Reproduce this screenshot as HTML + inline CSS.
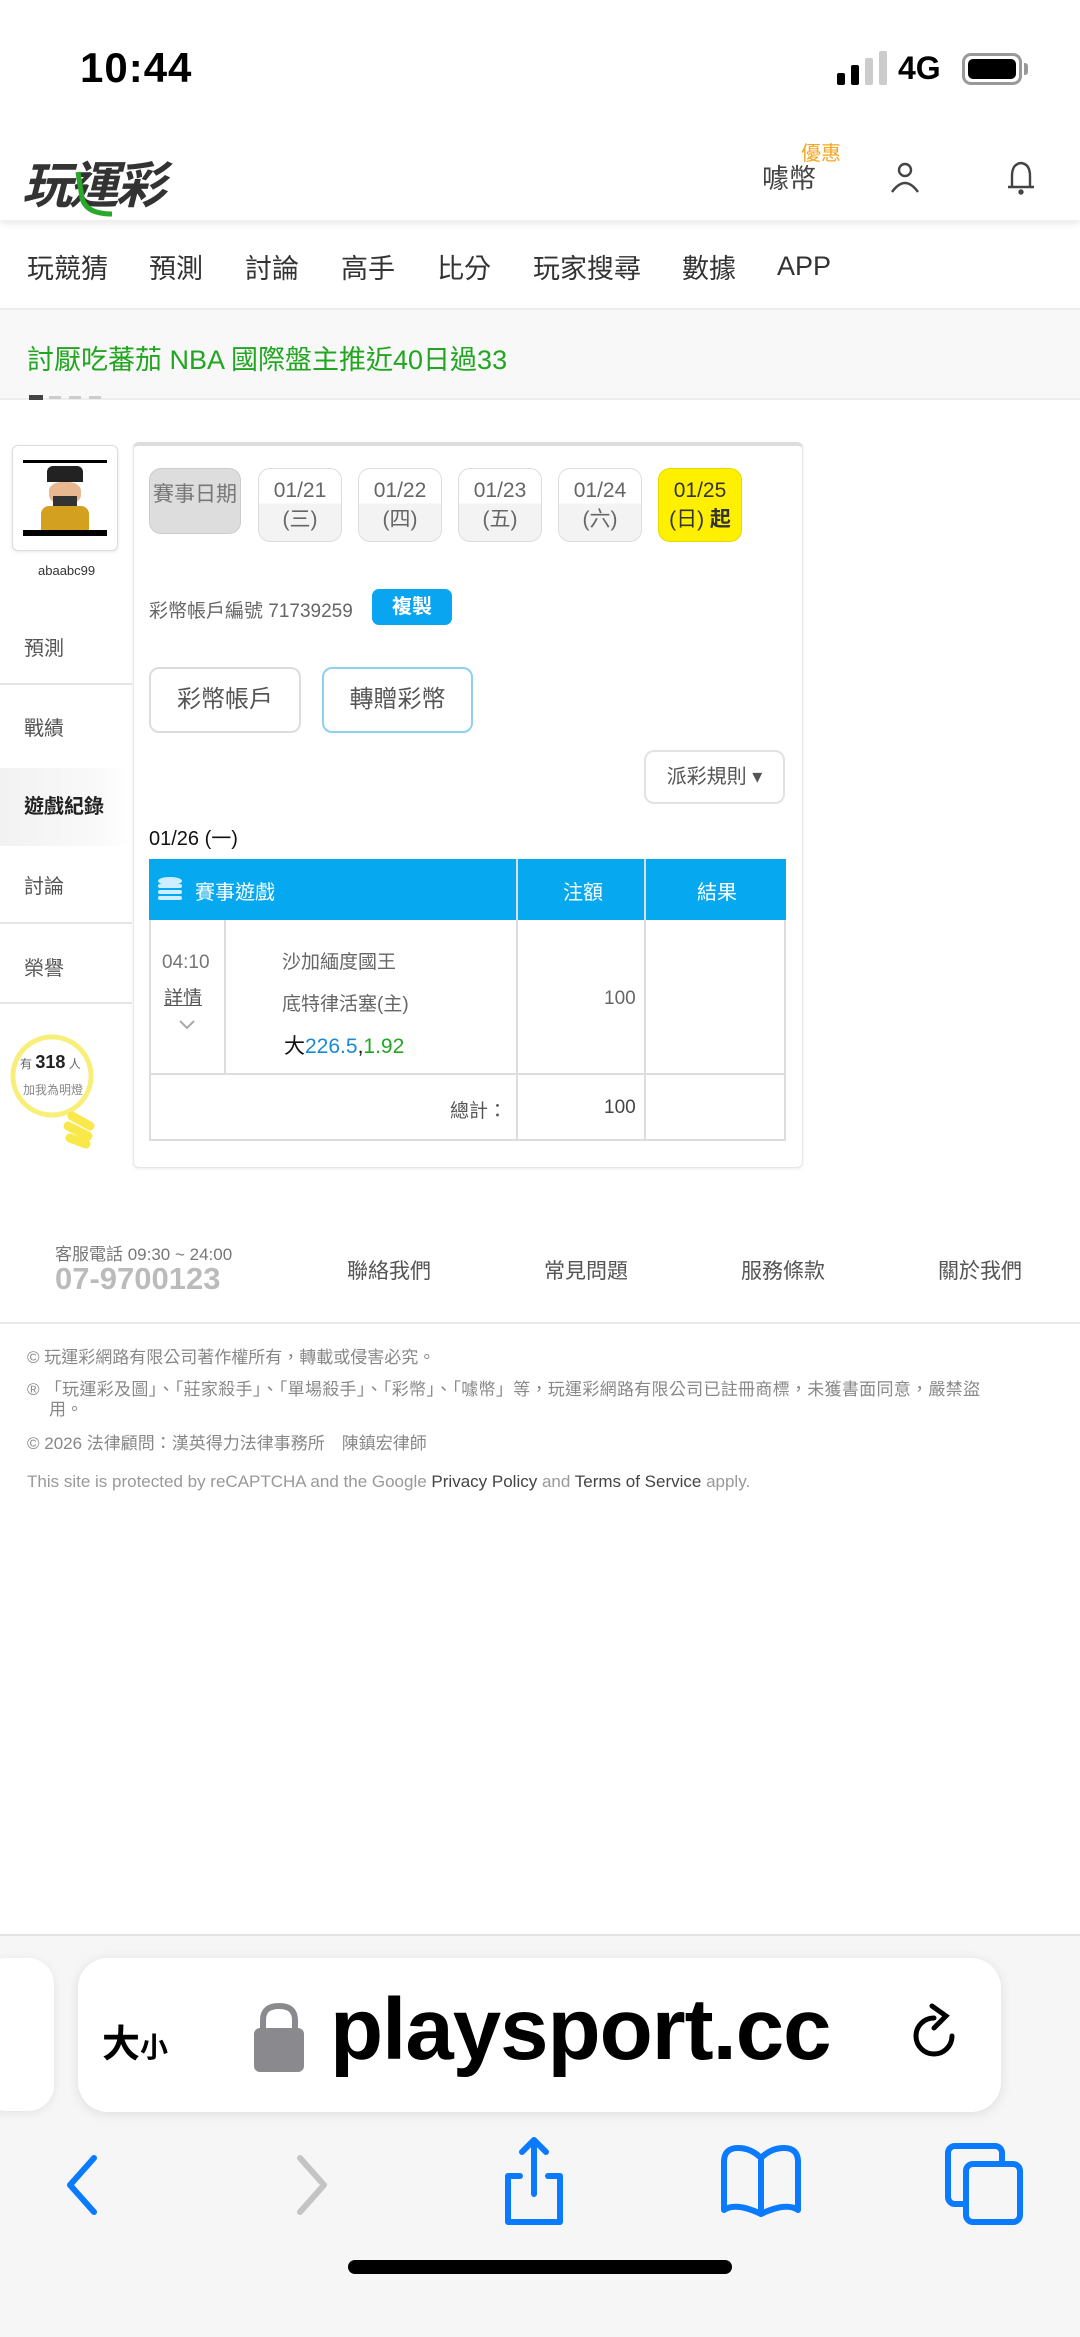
<!DOCTYPE html>
<html><head><meta charset="utf-8"><style>
*{margin:0;padding:0;box-sizing:border-box}
body{width:1080px;height:2337px;position:relative;background:#fff;font-family:"Liberation Sans","Noto Sans CJK TC",sans-serif;overflow:hidden;color:#333}
.a{position:absolute;white-space:nowrap}
.db{position:absolute;top:468px;width:84px;height:74px;border:1px solid #ddd;border-radius:12px;background:linear-gradient(#fff 0,#fff 48%,#f3f3f3 48%);text-align:center;font-size:21px;color:#666;line-height:29px;padding-top:7px}
.side{position:absolute;left:0;width:130px;font-size:20px;color:#555;padding-left:24px}
.ln{position:absolute;left:0;width:132px;height:2px;background:#e5e5e5}
.ft{font-size:17px;color:#888}
</style></head><body>
<!-- status bar -->
<div class="a" style="left:80px;top:44px;font-size:42px;font-weight:bold;color:#000;letter-spacing:1px">10:44</div>
<div class="a" style="left:837px;top:73px;width:8px;height:12px;background:#000;border-radius:2px"></div>
<div class="a" style="left:851px;top:65px;width:8px;height:20px;background:#000;border-radius:2px"></div>
<div class="a" style="left:865px;top:58px;width:8px;height:27px;background:#ccc;border-radius:2px"></div>
<div class="a" style="left:879px;top:51px;width:8px;height:34px;background:#ccc;border-radius:2px"></div>
<div class="a" style="left:898px;top:50px;font-size:32px;font-weight:bold;color:#000">4G</div>
<div class="a" style="left:962px;top:53px;width:60px;height:32px;border:3px solid #999;border-radius:9px;padding:3px"><div style="width:100%;height:100%;background:#000;border-radius:5px"></div></div>
<div class="a" style="left:1024px;top:63px;width:4px;height:12px;background:#999;border-radius:0 3px 3px 0"></div>
<!-- header -->
<div class="a" style="left:0;top:120px;width:1080px;height:100px;background:#fff;box-shadow:0 4px 6px rgba(0,0,0,.08)"></div>
<div class="a" style="left:22px;top:146px;font-size:50px;font-weight:bold;font-style:italic;color:#333;letter-spacing:-3px">玩運彩</div>
<svg class="a" style="left:70px;top:170px" width="50" height="50"><path d="M8 2 L12 28 Q16 44 42 44" stroke="#2aa82a" stroke-width="5" fill="none"/></svg>
<div class="a" style="left:762px;top:157px;font-size:27px;color:#444">噱幣</div>
<div class="a" style="left:801px;top:137px;font-size:20px;color:#f5a623">優惠</div>
<svg class="a" style="left:888px;top:160px" width="34" height="34" fill="none" stroke="#444" stroke-width="2.4"><circle cx="17" cy="10" r="6"/><path d="M4 32 Q17 14 30 32"/></svg>
<svg class="a" style="left:1004px;top:160px" width="34" height="36" fill="none" stroke="#444" stroke-width="2.4"><path d="M17 3 Q8 4 8 16 L8 27 L26 27 L26 16 Q26 4 17 3 Z M4 27 L30 27"/><circle cx="17" cy="32" r="1.5" fill="#444"/></svg>
<!-- nav -->
<div class="a" style="left:27px;top:247px;font-size:27px;color:#333">
<span style="position:absolute;left:0">玩競猜</span><span style="position:absolute;left:122px">預測</span><span style="position:absolute;left:218px">討論</span><span style="position:absolute;left:314px">高手</span><span style="position:absolute;left:410px">比分</span><span style="position:absolute;left:506px">玩家搜尋</span><span style="position:absolute;left:655px">數據</span><span style="position:absolute;left:750px;top:4px">APP</span></div>
<div class="a" style="left:0;top:308px;width:1080px;height:92px;background:#f8f8f8;border-top:2px solid #eee;border-bottom:2px solid #eee"></div>
<div class="a" style="left:27px;top:338px;font-size:27px;color:#22a622">討厭吃蕃茄 NBA 國際盤主推近40日過33</div>
<div class="a" style="left:29px;top:395px;width:14px;height:5px;background:#444"></div>
<div class="a" style="left:49px;top:396px;width:12px;height:3px;background:#ccc"></div>
<div class="a" style="left:69px;top:396px;width:12px;height:3px;background:#ccc"></div>
<div class="a" style="left:89px;top:396px;width:12px;height:3px;background:#ccc"></div>
<!-- sidebar -->
<div class="a" style="left:12px;top:445px;width:106px;height:106px;border:1px solid #ddd;border-radius:6px;background:#fff;box-shadow:0 1px 3px rgba(0,0,0,.1)"></div>
<div class="a" style="left:23px;top:460px;width:84px;height:76px;background:#fff">
<div style="position:absolute;left:0;top:0;width:84px;height:3px;background:#000"></div>
<div style="position:absolute;left:24px;top:6px;width:36px;height:16px;background:#222;border-radius:6px 6px 0 0"></div>
<div style="position:absolute;left:26px;top:22px;width:32px;height:22px;background:#e8b890;border-radius:40%"></div>
<div style="position:absolute;left:30px;top:36px;width:24px;height:10px;background:#333"></div>
<div style="position:absolute;left:18px;top:46px;width:48px;height:24px;background:#d4a020;border-radius:8px 8px 0 0"></div>
<div style="position:absolute;left:0;top:70px;width:84px;height:6px;background:#000"></div>
</div>
<div class="a" style="left:38px;top:563px;font-size:13px;color:#333">abaabc99</div>
<div class="side" style="top:632px">預測</div>
<div class="ln" style="top:683px"></div>
<div class="side" style="top:712px">戰績</div>
<div class="a" style="left:0;top:768px;width:133px;height:78px;background:linear-gradient(90deg,#f2f2f2,#f9f9f9 70%,#fff)"></div>
<div class="side" style="top:790px;font-weight:bold;color:#222">遊戲紀錄</div>
<div class="side" style="top:870px">討論</div>
<div class="ln" style="top:922px"></div>
<div class="side" style="top:952px">榮譽</div>
<div class="ln" style="top:1002px"></div>
<svg class="a" style="left:6px;top:1030px" width="96" height="120"><circle cx="46" cy="46" r="39" fill="none" stroke="#f8ef7a" stroke-width="5"/><g stroke="#f8e84a" stroke-width="9" stroke-linecap="round"><path d="M66 86 L84 96"/><path d="M62 96 L82 106"/><path d="M64 108 L80 114"/></g></svg>
<div class="a" style="left:20px;top:1052px;font-size:12px;color:#666">有 <b style="font-size:18px;color:#222">318</b> 人</div>
<div class="a" style="left:23px;top:1081px;font-size:12px;color:#888">加我為明燈</div>
<!-- main panel -->
<div class="a" style="left:133px;top:442px;width:670px;height:726px;border:1px solid #e6e6e6;border-top:4px solid #ddd;border-radius:6px;background:#fff;box-shadow:0 1px 3px rgba(0,0,0,.08)"></div>
<div class="db" style="left:149px;width:92px;height:66px;top:468px;background:#ddd;border-color:#ccc;line-height:52px;padding:0;font-size:21px;color:#777">賽事日期</div>
<div class="db" style="left:258px">01/21<br>(三)</div>
<div class="db" style="left:358px">01/22<br>(四)</div>
<div class="db" style="left:458px">01/23<br>(五)</div>
<div class="db" style="left:558px">01/24<br>(六)</div>
<div class="db" style="left:658px;background:#fff000;border-color:#e8d800;color:#333">01/25<br>(日) <b>起</b></div>
<div class="a" style="left:149px;top:596px;font-size:19px;color:#666">彩幣帳戶編號 71739259</div>
<div class="a" style="left:372px;top:589px;width:80px;height:36px;background:#0aa5f0;border-radius:7px;color:#fff;font-size:20px;font-weight:bold;text-align:center;line-height:36px">複製</div>
<div class="a" style="left:149px;top:667px;width:152px;height:66px;border:2px solid #ddd;border-radius:10px;text-align:center;line-height:62px;font-size:24px;color:#555">彩幣帳戶</div>
<div class="a" style="left:322px;top:667px;width:151px;height:66px;border:2px solid #8dd0f0;border-radius:10px;text-align:center;line-height:62px;font-size:24px;color:#555">轉贈彩幣</div>
<div class="a" style="left:644px;top:750px;width:141px;height:54px;border:2px solid #e2e2e2;border-radius:10px;text-align:center;line-height:50px;font-size:20px;color:#555">派彩規則 ▾</div>
<div class="a" style="left:149px;top:822px;font-size:20px;color:#111">01/26 (一)</div>
<div class="a" style="left:149px;top:859px;width:637px;height:282px;border:2px solid #ddd"></div>
<div class="a" style="left:149px;top:859px;width:637px;height:61px;background:#06a8f0"></div>
<div class="a" style="left:516px;top:859px;width:2px;height:282px;background:#ddd"></div>
<div class="a" style="left:644px;top:859px;width:2px;height:282px;background:#ddd"></div>
<div class="a" style="left:224px;top:920px;width:2px;height:155px;background:#ddd"></div>
<div class="a" style="left:149px;top:1073px;width:637px;height:2px;background:#ddd"></div>
<svg class="a" style="left:157px;top:876px" width="26" height="28"><g fill="#cfeeff"><ellipse cx="13" cy="5" rx="12" ry="4"/><rect x="1" y="8" width="24" height="4" rx="2"/><rect x="1" y="14" width="24" height="4" rx="2"/><rect x="1" y="20" width="24" height="4" rx="2"/></g></svg>
<div class="a" style="left:195px;top:876px;font-size:20px;color:#fff">賽事遊戲</div>
<div class="a" style="left:563px;top:876px;font-size:20px;color:#fff">注額</div>
<div class="a" style="left:697px;top:876px;font-size:20px;color:#fff">結果</div>
<div class="a" style="left:162px;top:952px;font-size:19px;color:#777">04:10</div>
<div class="a" style="left:164px;top:983px;font-size:19px;color:#555;text-decoration:underline">詳情</div>
<svg class="a" style="left:178px;top:1019px" width="18" height="12"><path d="M2 2 L9 9 L16 2" stroke="#aaa" stroke-width="2" fill="none"/></svg>
<div class="a" style="left:282px;top:947px;font-size:19px;color:#666">沙加緬度國王</div>
<div class="a" style="left:282px;top:989px;font-size:19px;color:#666">底特律活塞(主)</div>
<div class="a" style="left:284px;top:1030px;font-size:21px;color:#111">大<span style="color:#1a8ad4">226.5</span>,<span style="color:#22a622">1.92</span></div>
<div class="a" style="left:604px;top:988px;font-size:19px;color:#666">100</div>
<div class="a" style="left:450px;top:1096px;font-size:19px;color:#555">總計：</div>
<div class="a" style="left:604px;top:1097px;font-size:19px;color:#444">100</div>
<!-- footer -->
<div class="a" style="left:55px;top:1240px;font-size:17px;color:#777">客服電話 09:30 ~ 24:00</div>
<div class="a" style="left:55px;top:1261px;font-size:31px;color:#bbb;font-weight:bold">07-9700123</div>
<div class="a" style="left:347px;top:1255px;font-size:21px;color:#555">聯絡我們</div>
<div class="a" style="left:544px;top:1255px;font-size:21px;color:#555">常見問題</div>
<div class="a" style="left:741px;top:1255px;font-size:21px;color:#555">服務條款</div>
<div class="a" style="left:938px;top:1255px;font-size:21px;color:#555">關於我們</div>
<div class="a" style="left:0;top:1322px;width:1080px;height:2px;background:#eaeaea"></div>
<div class="a ft" style="left:27px;top:1343px">© 玩運彩網路有限公司著作權所有，轉載或侵害必究。</div>
<div class="a ft" style="left:27px;top:1375px;letter-spacing:0.3px">® 「玩運彩及圖」、「莊家殺手」、「單場殺手」、「彩幣」、「噱幣」等，玩運彩網路有限公司已註冊商標，未獲書面同意，嚴禁盜</div>
<div class="a ft" style="left:49px;top:1395px">用。</div>
<div class="a ft" style="left:27px;top:1429px">© 2026 法律顧問：漢英得力法律事務所　陳鎮宏律師</div>
<div class="a ft" style="left:27px;top:1472px;color:#999">This site is protected by reCAPTCHA and the Google <b style="color:#444;font-weight:normal">Privacy Policy</b> and <b style="color:#444;font-weight:normal">Terms of Service</b> apply.</div>
<!-- safari -->
<div class="a" style="left:0;top:1934px;width:1080px;height:403px;background:#f6f6f6;border-top:2px solid #e3e3e3"></div>
<div class="a" style="left:-20px;top:1958px;width:74px;height:153px;background:#fff;border-radius:26px;box-shadow:0 2px 10px rgba(0,0,0,.08)"></div>
<div class="a" style="left:78px;top:1958px;width:923px;height:154px;background:#fff;border-radius:30px;box-shadow:0 2px 12px rgba(0,0,0,.1)"></div>
<div class="a" style="left:102px;top:2013px;font-size:38px;font-weight:bold;color:#000">大<span style="font-size:28px">小</span></div>
<svg class="a" style="left:252px;top:2000px" width="54" height="72"><path d="M11 30 V20 Q11 6 27 6 Q43 6 43 20 V30" stroke="#8a8a8e" stroke-width="6" fill="none"/><rect x="2" y="28" width="50" height="44" rx="6" fill="#8a8a8e"/></svg>
<div class="a" style="left:330px;top:1980px;font-size:87px;font-weight:bold;color:#000;letter-spacing:-1px">playsport.cc</div>
<svg class="a" style="left:912px;top:2002px" width="56" height="64" fill="none" stroke="#000" stroke-width="5" stroke-linecap="round"><path d="M22 16 A18 18 0 1 0 40 34"/><path d="M20 4 L34 14 L22 26"/></svg>
<svg class="a" style="left:56px;top:2152px" width="50" height="70" fill="none" stroke="#0a7aff" stroke-width="6" stroke-linecap="round" stroke-linejoin="round"><path d="M38 6 L14 33 L38 60"/></svg>
<svg class="a" style="left:288px;top:2152px" width="50" height="70" fill="none" stroke="#c4c4c4" stroke-width="6" stroke-linecap="round" stroke-linejoin="round"><path d="M12 6 L36 33 L12 60"/></svg>
<svg class="a" style="left:496px;top:2134px" width="76" height="94" fill="none" stroke="#0a7aff" stroke-width="6" stroke-linecap="round" stroke-linejoin="round"><path d="M24 42 H12 V88 H64 V42 H52"/><path d="M38 60 V6 M26 18 L38 6 L50 18"/></svg>
<svg class="a" style="left:716px;top:2142px" width="90" height="80" fill="none" stroke="#0a7aff" stroke-width="6" stroke-linejoin="round"><path d="M45 16 Q35 6 22 6 Q8 6 8 20 V68 Q20 60 45 72 Q70 60 82 68 V20 Q82 6 68 6 Q55 6 45 16 Z M45 16 V72"/></svg>
<svg class="a" style="left:942px;top:2140px" width="84" height="88" fill="none" stroke="#0a7aff" stroke-width="6" stroke-linejoin="round"><rect x="6" y="6" width="54" height="58" rx="7"/><rect x="24" y="24" width="54" height="58" rx="7" fill="#f6f6f6"/></svg>
<div class="a" style="left:348px;top:2260px;width:384px;height:14px;background:#000;border-radius:7px"></div>
</body></html>
